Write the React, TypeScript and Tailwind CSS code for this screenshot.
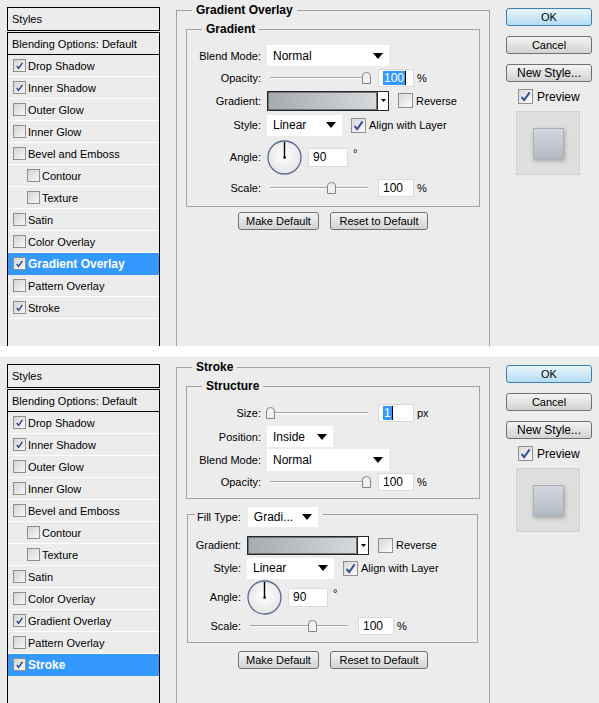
import React from "react";

type StyleItem = { name: string; on?: boolean; sub?: boolean };

const LAYER_STYLES: StyleItem[] = [
  { name: "Drop Shadow", on: true },
  { name: "Inner Shadow", on: true },
  { name: "Outer Glow" },
  { name: "Inner Glow" },
  { name: "Bevel and Emboss" },
  { name: "Contour", sub: true },
  { name: "Texture", sub: true },
  { name: "Satin" },
  { name: "Color Overlay" },
  { name: "Gradient Overlay", on: true },
  { name: "Pattern Overlay" },
  { name: "Stroke", on: true },
];

function TinyCheck({ on }: { on?: boolean }) {
  return (
    <span className="w-[13px] h-[13px] shrink-0 border border-[#8e8f8f] bg-linear-to-br from-[#d4d4d4] to-[#f8f8f8] flex items-center justify-center">
      {on && (
        <svg width="9" height="9" viewBox="0 0 9 9">
          <path d="M1.8 5 L3.6 7.4 L7.4 1.8" fill="none" stroke="#2b3f8c" strokeWidth="1.4" />
        </svg>
      )}
    </span>
  );
}

function Check({ on, className = "" }: { on?: boolean; className?: string }) {
  return (
    <span
      className={`w-[15px] h-[15px] shrink-0 border border-[#8f8f8f] bg-linear-to-br from-[#d8d8d8] to-[#fbfbfb] flex items-center justify-center ${className}`}
    >
      {on && (
        <svg width="11" height="11" viewBox="0 0 11 11">
          <path d="M1.6 6 L4.2 9.2 L9.6 1.4" fill="none" stroke="#3a4d9c" strokeWidth="2" />
        </svg>
      )}
    </span>
  );
}

function StyleList({ active }: { active: string }) {
  return (
    <div className="ml-[7px] mt-[7px] w-[153px] shrink-0 flex flex-col">
      <div className="h-[24px] border border-black px-[4px] flex items-center">Styles</div>
      <div className="mt-[1px] grow border border-b-0 border-black flex flex-col">
        <div className="h-[22px] border-b border-black px-[4px] flex items-center">Blending Options: Default</div>
        {LAYER_STYLES.map((s) => {
          const sel = s.name === active;
          return (
            <div
              key={s.name}
              className={`h-[22px] border-b flex items-center ${
                sel ? "bg-[#3399ff] border-[#3399ff] text-white font-bold text-[12px]" : "border-white"
              } ${s.sub ? "pl-[19px]" : "pl-[5px]"}`}
            >
              <TinyCheck on={s.on} />
              <span className="ml-[2px]">{s.name}</span>
            </div>
          );
        })}
      </div>
    </div>
  );
}

function PushButton({
  children,
  className = "",
  primary,
}: {
  children: React.ReactNode;
  className?: string;
  primary?: boolean;
}) {
  return (
    <div
      className={`rounded-[3px] border flex items-center justify-center shrink-0 ${
        primary
          ? "border-[#3c7fb1] bg-linear-to-b from-[#eaf6fd] to-[#b4dcf2]"
          : "border-[#707070] bg-linear-to-b from-[#f4f4f4] to-[#d2d2d2]"
      } ${className}`}
    >
      {children}
    </div>
  );
}

function SideButtons() {
  return (
    <div className="ml-[16px] w-[86px] pt-[8px] flex flex-col shrink-0 text-[12px]">
      <PushButton primary className="h-[18px] text-[11px]">
        OK
      </PushButton>
      <PushButton className="mt-[10px] h-[18px] text-[11px]">Cancel</PushButton>
      <PushButton className="mt-[10px] h-[18px]">New Style...</PushButton>
      <div className="mt-[6px] ml-[12px] h-[17px] flex items-center">
        <Check on />
        <span className="ml-[4px]">Preview</span>
      </div>
      <div className="mt-[6px] ml-[10px] w-[64px] h-[64px] bg-[#dedede] border border-[#d2d2d2] flex items-center justify-center">
        <div className="w-[31px] h-[31px] border border-[#a9b0b7] bg-linear-to-b from-[#d2d8dd] to-[#b3bac1] shadow-[1px_2px_4px_rgba(0,0,0,0.25)]" />
      </div>
    </div>
  );
}

// etched group frame: the top edge is split around the caption
function GroupBox({
  title,
  className = "",
  headClass = "h-[14px]",
  lineClass = "mt-[7px]",
  leadClass = "w-[16px]",
  titleClass = "px-[4px] font-bold text-[12px]",
  bodyClass = "",
  children,
}: {
  title: React.ReactNode;
  className?: string;
  headClass?: string;
  lineClass?: string;
  leadClass?: string;
  titleClass?: string;
  bodyClass?: string;
  children: React.ReactNode;
}) {
  return (
    <div className={`flex flex-col ${className}`}>
      <div className={`flex shrink-0 ${headClass}`}>
        <div className={`shrink-0 border-l border-t border-[#a2a2a2] ${leadClass} ${lineClass}`} />
        <div className={`shrink-0 ${titleClass}`}>{title}</div>
        <div className={`grow border-r border-t border-[#a2a2a2] ${lineClass}`} />
      </div>
      <div className={`border border-t-0 border-[#a2a2a2] ${bodyClass}`}>{children}</div>
    </div>
  );
}

function Arrow() {
  return (
    <svg width="10" height="6" viewBox="0 0 10 6" className="shrink-0">
      <polygon points="0,0 10,0 5,6" fill="#000" />
    </svg>
  );
}

function Dropdown({ value, className }: { value: string; className: string }) {
  return (
    <div className={`bg-white shrink-0 flex items-center pl-[6px] pr-[6px] text-[12px] font-normal ${className}`}>
      <span className="grow">{value}</span>
      <Arrow />
    </div>
  );
}

function Field({ value, selected, className }: { value: string; selected?: boolean; className: string }) {
  return (
    <div className={`bg-white border border-[#dadada] shrink-0 flex items-center pl-[4px] text-[12px] ${className}`}>
      {selected ? (
        <>
          <span className="bg-[#3399ff] text-white px-[1px] leading-[14px]">{value}</span>
          <span className="w-[1px] h-[14px] bg-black" />
        </>
      ) : (
        value
      )}
    </div>
  );
}

function Slider({ pos }: { pos: number }) {
  return (
    <div className="relative w-[104px] h-[14px] shrink-0">
      <div className="absolute left-[3px] right-[3px] top-[6px] h-[2px] border-t border-[#a3a3a3] bg-white" />
      <svg width="9" height="12" viewBox="0 0 9 12" className="absolute top-[1px]" style={{ left: pos - 4 }}>
        <path d="M0.5 11.5 L0.5 4 Q0.5 0.5 4.5 0.5 Q8.5 0.5 8.5 4 L8.5 11.5 Z" fill="#f1f1f1" stroke="#858585" />
      </svg>
    </div>
  );
}

function GradientPicker({ className }: { className: string }) {
  return (
    <div className={`flex shrink-0 border border-[#262626] ${className}`}>
      <div className="grow border border-[#6f7378] bg-linear-to-r from-[#a6abb0] to-[#d6d9dc]" />
      <div className="w-[11px] bg-white border-l border-[#262626] flex items-center justify-center">
        <svg width="5" height="3" viewBox="0 0 5 3">
          <polygon points="0,0 5,0 2.5,3" fill="#000" />
        </svg>
      </div>
    </div>
  );
}

function AngleDial() {
  return (
    <svg width="35" height="35" viewBox="0 0 35 35" className="shrink-0">
      <defs>
        <radialGradient id="dialFill" cx="50%" cy="45%" r="60%">
          <stop offset="0" stopColor="#ffffff" />
          <stop offset="1" stopColor="#e3e3e3" />
        </radialGradient>
      </defs>
      <circle cx="17.5" cy="17.5" r="16.5" fill="url(#dialFill)" stroke="#5a6a8e" strokeWidth="1.3" />
      <line x1="17.5" y1="17.5" x2="17.5" y2="2" stroke="#000" strokeWidth="1.4" />
      <rect x="16.5" y="16.5" width="2.2" height="2.2" fill="#000" />
    </svg>
  );
}

function Row({
  label,
  labelClass,
  className,
  children,
}: {
  label: string;
  labelClass: string;
  className: string;
  children: React.ReactNode;
}) {
  return (
    <div className={`flex items-center ${className}`}>
      <span className={`shrink-0 text-right ${labelClass}`}>{label}</span>
      <div className="ml-[6px] flex items-center">{children}</div>
    </div>
  );
}

function DefaultButtons({ className }: { className: string }) {
  return (
    <div className={`flex justify-center gap-[11px] ${className}`}>
      <PushButton className="w-[81px] h-[18px]">Make Default</PushButton>
      <PushButton className="w-[98px] h-[18px]">Reset to Default</PushButton>
    </div>
  );
}

function GradientOverlayPane() {
  return (
    <GroupBox title="Gradient Overlay" className="grow" bodyClass="grow border-b-0 flex flex-col">
      <GroupBox title="Gradient" className="mx-[9px] mt-[5px]" bodyClass="pb-[7px]">
        <Row label="Blend Mode:" labelClass="w-[74px]" className="mt-[9px] h-[21px]">
          <Dropdown value="Normal" className="w-[122px] h-[21px]" />
        </Row>
        <Row label="Opacity:" labelClass="w-[74px]" className="h-[24px]">
          <Slider pos={99} />
          <Field value="100" selected className="ml-[7px] w-[36px] h-[18px]" />
          <span className="ml-[3px]">%</span>
        </Row>
        <Row label="Gradient:" labelClass="w-[74px]" className="h-[21px]">
          <GradientPicker className="w-[122px] h-[20px]" />
          <Check className="ml-[9px]" />
          <span className="ml-[3px]">Reverse</span>
        </Row>
        <Row label="Style:" labelClass="w-[74px]" className="mt-[3px] h-[22px]">
          <Dropdown value="Linear" className="w-[75px] h-[21px]" />
          <Check on className="ml-[9px]" />
          <span className="ml-[3px]">Align with Layer</span>
        </Row>
        <Row label="Angle:" labelClass="w-[74px]" className="mt-[3px] h-[36px]">
          <AngleDial />
          <Field value="90" className="ml-[6px] w-[40px] h-[19px]" />
          <span className="ml-[5px] -mt-[8px]">°</span>
        </Row>
        <Row label="Scale:" labelClass="w-[74px]" className="mt-[2px] h-[22px]">
          <Slider pos={64} />
          <Field value="100" className="ml-[7px] w-[36px] h-[18px]" />
          <span className="ml-[3px]">%</span>
        </Row>
      </GroupBox>
      <DefaultButtons className="mt-[5px]" />
    </GroupBox>
  );
}

function StrokePane() {
  return (
    <GroupBox title="Stroke" className="grow" bodyClass="grow border-b-0 flex flex-col">
      <GroupBox title="Structure" className="mx-[9px] mt-[5px]" bodyClass="pb-[5px]">
        <Row label="Size:" labelClass="w-[74px]" className="mt-[8px] h-[23px]">
          <Slider pos={3} />
          <Field value="1" selected className="ml-[7px] w-[36px] h-[18px]" />
          <span className="ml-[3px]">px</span>
        </Row>
        <Row label="Position:" labelClass="w-[74px]" className="h-[25px]">
          <Dropdown value="Inside" className="w-[66px] h-[21px]" />
        </Row>
        <Row label="Blend Mode:" labelClass="w-[74px]" className="h-[22px]">
          <Dropdown value="Normal" className="w-[122px] h-[22px]" />
        </Row>
        <Row label="Opacity:" labelClass="w-[74px]" className="h-[22px]">
          <Slider pos={99} />
          <Field value="100" className="ml-[7px] w-[36px] h-[18px]" />
          <span className="ml-[3px]">%</span>
        </Row>
      </GroupBox>
      <GroupBox
        className="ml-[10px] mr-[11px] mt-[2px]"
        headClass="h-[26px]"
        lineClass="mt-[13px]"
        leadClass="w-[8px]"
        titleClass="pl-[2px] pr-[5px] pt-[6px] flex items-start"
        bodyClass="pb-[4px]"
        title={
          <>
            <span className="mt-[3px]">Fill Type:</span>
            <Dropdown value="Gradi..." className="ml-[7px] w-[70px] h-[20px]" />
          </>
        }
      >
        <Row label="Gradient:" labelClass="w-[53px]" className="mt-[7px] h-[22px]">
          <GradientPicker className="w-[122px] h-[19px]" />
          <Check className="ml-[9px]" />
          <span className="ml-[3px]">Reverse</span>
        </Row>
        <Row label="Style:" labelClass="w-[53px]" className="h-[24px]">
          <Dropdown value="Linear" className="w-[87px] h-[21px]" />
          <Check on className="ml-[9px]" />
          <span className="ml-[3px]">Align with Layer</span>
        </Row>
        <Row label="Angle:" labelClass="w-[53px]" className="h-[34px]">
          <AngleDial />
          <Field value="90" className="ml-[6px] w-[40px] h-[19px]" />
          <span className="ml-[5px] -mt-[8px]">°</span>
        </Row>
        <Row label="Scale:" labelClass="w-[53px]" className="h-[24px]">
          <Slider pos={65} />
          <Field value="100" className="ml-[7px] w-[36px] h-[18px]" />
          <span className="ml-[3px]">%</span>
        </Row>
      </GroupBox>
      <DefaultButtons className="mt-[8px]" />
    </GroupBox>
  );
}

function LayerStyleDialog({ active, children }: { active: string; children: React.ReactNode }) {
  return (
    <div className="h-[346px] shrink-0 overflow-hidden bg-[#ececec] flex">
      <StyleList active={active} />
      <div className="ml-[16px] w-[314px] pt-[3px] shrink-0 flex flex-col">{children}</div>
      <SideButtons />
    </div>
  );
}

export default function App() {
  return (
    <div className="w-[599px] h-[703px] bg-white flex flex-col gap-[11px] overflow-hidden font-['Liberation_Sans',Arial,sans-serif] text-[11px] leading-[14px] text-black">
      <LayerStyleDialog active="Gradient Overlay">
        <GradientOverlayPane />
      </LayerStyleDialog>
      <LayerStyleDialog active="Stroke">
        <StrokePane />
      </LayerStyleDialog>
    </div>
  );
}
